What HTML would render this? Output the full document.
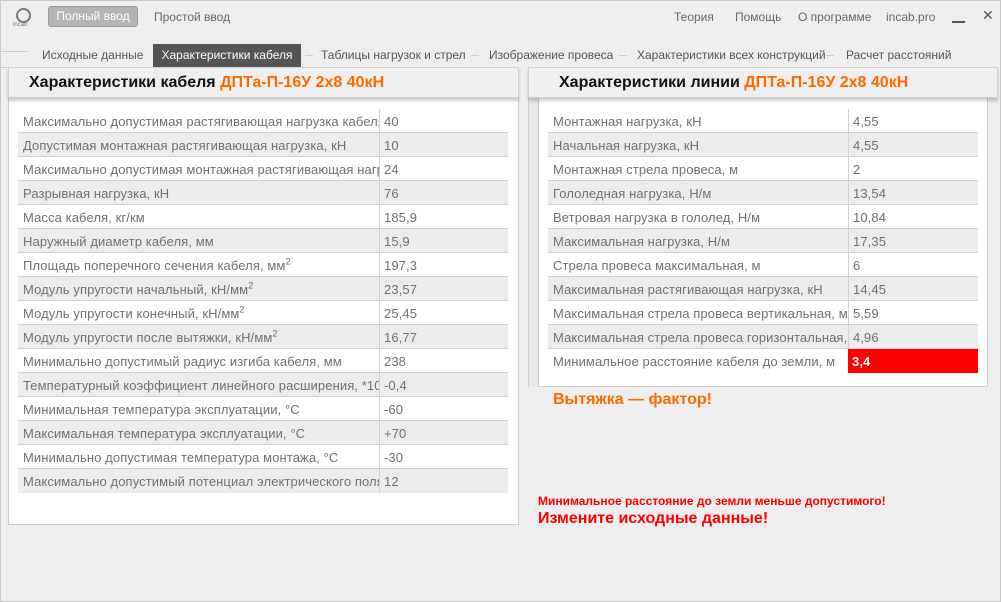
<!DOCTYPE html>
<html><head><meta charset="utf-8"><style>
*{margin:0;padding:0;box-sizing:border-box}
body{width:1001px;height:602px;background:#eeeeee;font-family:"Liberation Sans","Noto Sans CJK SC",sans-serif;position:relative;overflow:hidden;color:#707070}
.a{position:absolute}
.win{left:0;top:0;width:1001px;height:602px;border:1px solid #c8c8c8}
.tab{top:44px;height:23px;font-size:12px;line-height:23px;color:#555;white-space:nowrap}
.hdr{top:67px;height:31px;background:#efefef;border:1px solid #d0d0d0;font-weight:bold;font-size:16px;line-height:30px;color:#111;box-shadow:0 3px 3px rgba(0,0,0,.2)}
.hdr span{color:#ff6a00}
.box{background:#fff;border:1px solid #cfcfcf}
.row{position:absolute;height:24px;font-size:13px;line-height:25px;letter-spacing:.1px;border-bottom:1px solid #d2d2d2;white-space:nowrap;overflow:hidden}
.row.g{background:#ececec}
.row .k{position:absolute;left:5px;top:0;overflow:hidden}
.row .v{position:absolute;top:0;height:24px;border-left:1px solid #d2d2d2;padding-left:4px}
sup{font-size:9px;line-height:0}
</style></head><body>
<div class="a win"></div>
<div class="a" style="left:16px;top:8px;width:15px;height:15px;border:2px solid #777;border-radius:50%"></div>
<div class="a" style="left:13px;top:22px;font-size:6px;color:#777">incab</div>
<div class="a" style="left:48px;top:6px;width:90px;height:21px;background:#b4b4b4;border:1px solid #999;border-radius:3px;color:#fff;font-size:12px;line-height:19px;text-align:center">Полный ввод</div>
<div class="a" style="left:154px;top:10px;font-size:12px;color:#666">Простой ввод</div>
<div class="a" style="left:674px;top:10px;font-size:12px;color:#666">Теория</div>
<div class="a" style="left:735px;top:10px;font-size:12px;color:#666">Помощь</div>
<div class="a" style="left:798px;top:10px;font-size:12px;color:#666">О программе</div>
<div class="a" style="left:886px;top:10px;font-size:12px;color:#666">incab.pro</div>
<div class="a" style="left:952px;top:21px;width:13px;height:2px;background:#555"></div>
<div class="a" style="left:982px;top:7px;font-size:14px;color:#555">✕</div>
<div class="a" style="left:0;top:51px;width:28px;height:1px;background:#ccc"></div>
<div class="a" style="left:0;top:67px;width:8px;height:1px;background:#ccc"></div>
<div class="a tab" style="left:42px">Исходные данные</div>
<div class="a tab" style="left:153px;width:148px;background:#555;color:#fff;text-align:center">Характеристики кабеля</div>
<div class="a tab" style="left:321px">Таблицы нагрузок и стрел</div>
<div class="a tab" style="left:489px">Изображение провеса</div>
<div class="a tab" style="left:637px">Характеристики всех конструкций</div>
<div class="a tab" style="left:846px">Расчет расстояний</div>
<div class="a" style="left:305px;top:55px;width:8px;height:1px;background:#ccc"></div>
<div class="a" style="left:471px;top:55px;width:8px;height:1px;background:#ccc"></div>
<div class="a" style="left:619px;top:55px;width:8px;height:1px;background:#ccc"></div>
<div class="a" style="left:826px;top:55px;width:8px;height:1px;background:#ccc"></div>
<div class="a box" style="left:8px;top:97px;width:511px;height:428px"></div>
<div class="a hdr" style="left:8px;width:511px;padding-left:20px">Характеристики кабеля <span>ДПТа-П-16У 2х8 40кН</span></div>
<div class="a" style="left:528px;top:97px;width:10px;height:290px;background:#e8e8e8;border-left:1px solid #d0d0d0"></div>
<div class="a box" style="left:538px;top:97px;width:450px;height:290px"></div>
<div class="a hdr" style="left:528px;width:470px;padding-left:30px">Характеристики линии <span>ДПТа-П-16У 2х8 40кН</span></div>
<div class="a" style="left:553px;top:391px;font-size:16px;font-weight:bold;color:#ff6a00">Вытяжка — фактор!</div>
<div class="a" style="left:538px;top:494px;font-size:12px;font-weight:bold;color:#f00">Минимальное расстояние до земли меньше допустимого!</div>
<div class="a" style="left:538px;top:510px;font-size:16px;font-weight:bold;color:#f00">Измените исходные данные!</div>
<div style="position:absolute;left:18px;top:109px;width:490px">
<div class="row" style="top:0;width:490px"><span class="k" style="width:356px">Максимально допустимая растягивающая нагрузка кабеля, кН</span><span class="v" style="left:361px">40</span></div>
<div class="row g" style="top:24px;width:490px"><span class="k" style="width:356px">Допустимая монтажная растягивающая нагрузка, кН</span><span class="v" style="left:361px">10</span></div>
<div class="row" style="top:48px;width:490px"><span class="k" style="width:356px">Максимально допустимая монтажная растягивающая нагрузка</span><span class="v" style="left:361px">24</span></div>
<div class="row g" style="top:72px;width:490px"><span class="k" style="width:356px">Разрывная нагрузка, кН</span><span class="v" style="left:361px">76</span></div>
<div class="row" style="top:96px;width:490px"><span class="k" style="width:356px">Масса кабеля, кг/км</span><span class="v" style="left:361px">185,9</span></div>
<div class="row g" style="top:120px;width:490px"><span class="k" style="width:356px">Наружный диаметр кабеля, мм</span><span class="v" style="left:361px">15,9</span></div>
<div class="row" style="top:144px;width:490px"><span class="k" style="width:356px">Площадь поперечного сечения кабеля, мм<sup>2</sup></span><span class="v" style="left:361px">197,3</span></div>
<div class="row g" style="top:168px;width:490px"><span class="k" style="width:356px">Модуль упругости начальный, кН/мм<sup>2</sup></span><span class="v" style="left:361px">23,57</span></div>
<div class="row" style="top:192px;width:490px"><span class="k" style="width:356px">Модуль упругости конечный, кН/мм<sup>2</sup></span><span class="v" style="left:361px">25,45</span></div>
<div class="row g" style="top:216px;width:490px"><span class="k" style="width:356px">Модуль упругости после вытяжки, кН/мм<sup>2</sup></span><span class="v" style="left:361px">16,77</span></div>
<div class="row" style="top:240px;width:490px"><span class="k" style="width:356px">Минимально допустимый радиус изгиба кабеля, мм</span><span class="v" style="left:361px">238</span></div>
<div class="row g" style="top:264px;width:490px"><span class="k" style="width:356px">Температурный коэффициент линейного расширения, *10<sup>-6</sup>, 1/°С</span><span class="v" style="left:361px">-0,4</span></div>
<div class="row" style="top:288px;width:490px"><span class="k" style="width:356px">Минимальная температура эксплуатации, °С</span><span class="v" style="left:361px">-60</span></div>
<div class="row g" style="top:312px;width:490px"><span class="k" style="width:356px">Максимальная температура эксплуатации, °С</span><span class="v" style="left:361px">+70</span></div>
<div class="row" style="top:336px;width:490px"><span class="k" style="width:356px">Минимально допустимая температура монтажа, °С</span><span class="v" style="left:361px">-30</span></div>
<div class="row g" style="top:360px;width:490px;border-bottom:none"><span class="k" style="width:356px">Максимально допустимый потенциал электрического поля, кВ</span><span class="v" style="left:361px">12</span></div>
</div>
<div style="position:absolute;left:548px;top:109px;width:430px">
<div class="row" style="top:0;width:430px"><span class="k" style="width:296px">Монтажная нагрузка, кН</span><span class="v" style="left:300px">4,55</span></div>
<div class="row g" style="top:24px;width:430px"><span class="k" style="width:296px">Начальная нагрузка, кН</span><span class="v" style="left:300px">4,55</span></div>
<div class="row" style="top:48px;width:430px"><span class="k" style="width:296px">Монтажная стрела провеса, м</span><span class="v" style="left:300px">2</span></div>
<div class="row g" style="top:72px;width:430px"><span class="k" style="width:296px">Гололедная нагрузка, Н/м</span><span class="v" style="left:300px">13,54</span></div>
<div class="row" style="top:96px;width:430px"><span class="k" style="width:296px">Ветровая нагрузка в гололед, Н/м</span><span class="v" style="left:300px">10,84</span></div>
<div class="row g" style="top:120px;width:430px"><span class="k" style="width:296px">Максимальная нагрузка, Н/м</span><span class="v" style="left:300px">17,35</span></div>
<div class="row" style="top:144px;width:430px"><span class="k" style="width:296px">Стрела провеса максимальная, м</span><span class="v" style="left:300px">6</span></div>
<div class="row g" style="top:168px;width:430px"><span class="k" style="width:296px">Максимальная растягивающая нагрузка, кН</span><span class="v" style="left:300px">14,45</span></div>
<div class="row" style="top:192px;width:430px"><span class="k" style="width:296px">Максимальная стрела провеса вертикальная, м</span><span class="v" style="left:300px">5,59</span></div>
<div class="row g" style="top:216px;width:430px"><span class="k" style="width:296px">Максимальная стрела провеса горизонтальная, м</span><span class="v" style="left:300px">4,96</span></div>
<div class="row" style="top:240px;width:430px;border-bottom:none"><span class="k" style="width:296px">Минимальное расстояние кабеля до земли, м</span><span class="v" style="left:300px;width:130px;background:#f00;color:#fff;font-weight:bold;border-left:none">3,4</span></div>
</div>
</body></html>
